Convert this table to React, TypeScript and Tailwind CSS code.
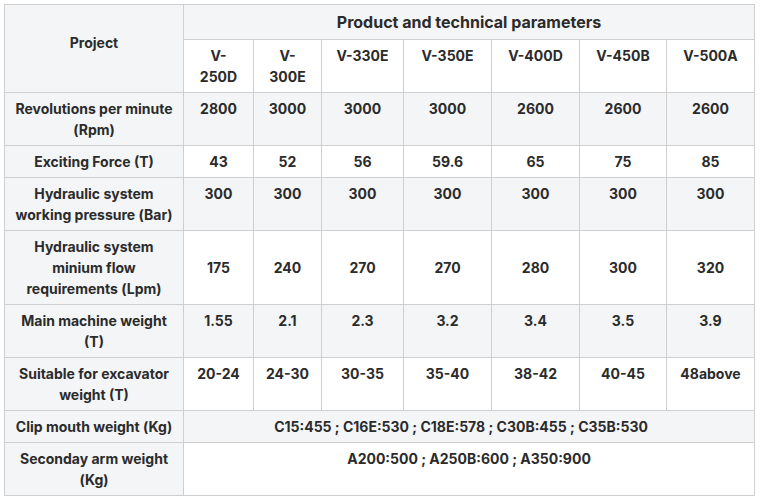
import React from "react";

const models = ["V-250D", "V-300E", "V-330E", "V-350E", "V-400D", "V-450B", "V-500A"];

interface Row {
    label: string;
    values: string[];
    middle?: boolean;
}

const rows: Row[] = [
    { label: "Revolutions per minute (Rpm)", values: ["2800", "3000", "3000", "3000", "2600", "2600", "2600"] },
    { label: "Exciting Force (T)", values: ["43", "52", "56", "59.6", "65", "75", "85"] },
    { label: "Hydraulic system working pressure (Bar)", values: ["300", "300", "300", "300", "300", "300", "300"] },
    {
        label: "Hydraulic system minium flow requirements (Lpm)",
        values: ["175", "240", "270", "270", "280", "300", "320"],
        middle: true,
    },
    { label: "Main machine weight (T)", values: ["1.55", "2.1", "2.3", "3.2", "3.4", "3.5", "3.9"] },
    { label: "Suitable for excavator weight (T)", values: ["20-24", "24-30", "30-35", "35-40", "38-42", "40-45", "48above"] },
];

const cell = "border border-[#cfcfcf] px-[10px] py-[5px] text-center";
const label = "border border-[#cfcfcf] px-[8px] py-[5px] text-center bg-[#f4f5f7]";

const App = () => {
    return (
        <div className="bg-white w-[760px] h-[500px] pt-1 pl-1 font-['Inter',sans-serif] text-[#2b2b2b] font-bold text-sm leading-[21px]">
            <table className="table-fixed border-collapse w-[750px]">
                <colgroup>
                    <col className="w-[179px]" />
                    <col className="w-[70px]" />
                    <col className="w-[68px]" />
                    <col className="w-[82px]" />
                    <col className="w-[88px]" />
                    <col className="w-[88px]" />
                    <col className="w-[87px]" />
                    <col className="w-[88px]" />
                </colgroup>
                <thead>
                    <tr className="bg-[#f4f5f7]">
                        <th rowSpan={2} className={label + " align-middle pb-[17px]"}>
                            Project
                        </th>
                        <th colSpan={7} className={cell + " text-base leading-6"}>
                            Product and technical parameters
                        </th>
                    </tr>
                    <tr className="bg-white">
                        {models.map((m) => (
                            <th key={m} className={cell + " align-top h-[53px]"}>
                                {m}
                            </th>
                        ))}
                    </tr>
                </thead>
                <tbody>
                    {rows.map((row, i) => (
                        <tr key={row.label} className={i % 2 === 0 ? "bg-[#f4f5f7]" : "bg-white"}>
                            <td className={label + " align-top"}>{row.label}</td>
                            {row.values.map((v, j) => (
                                <td key={j} className={cell + (row.middle ? " align-middle" : " align-top")}>
                                    {v}
                                </td>
                            ))}
                        </tr>
                    ))}
                    <tr className="bg-[#f4f5f7]">
                        <td className={label + " align-top"}>Clip mouth weight (Kg)</td>
                        <td colSpan={7} className={cell + " align-top pr-[26px]"}>
                            C15:455 ; C16E:530 ; C18E:578 ; C30B:455 ; C35B:530
                        </td>
                    </tr>
                    <tr className="bg-white">
                        <td className={label + " align-top"}>Seconday arm weight (Kg)</td>
                        <td colSpan={7} className={cell + " align-top"}>
                            A200:500 ; A250B:600 ; A350:900
                        </td>
                    </tr>
                </tbody>
            </table>
        </div>
    );
};

export default App;
